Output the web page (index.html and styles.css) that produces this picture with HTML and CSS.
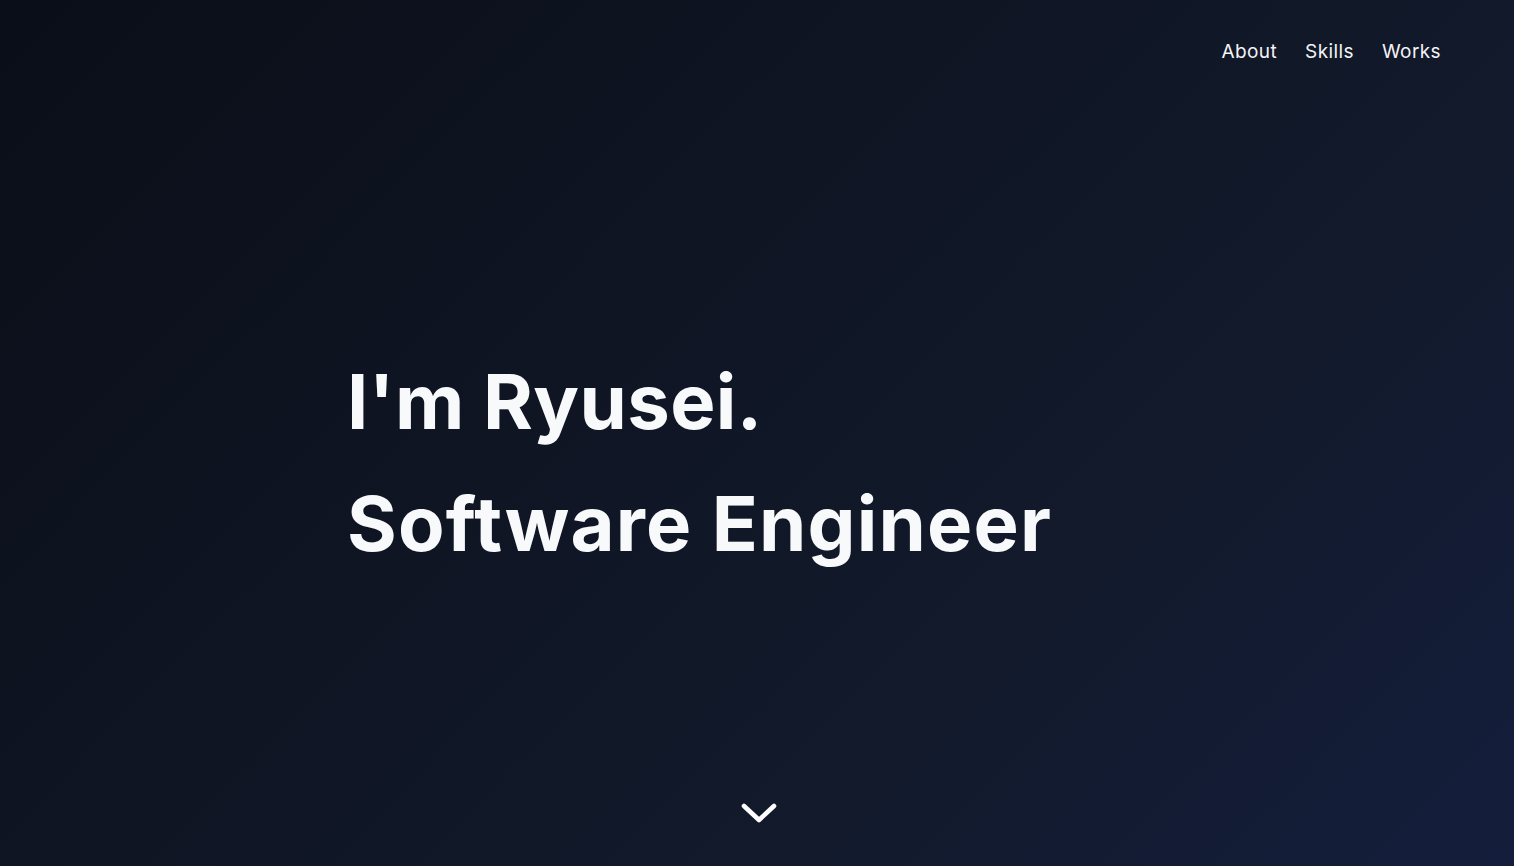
FILE: index.html
```html
<!DOCTYPE html>
<html lang="en">
<head>
<meta charset="utf-8">
<title>Ryusei</title>
<link rel="stylesheet" href="styles.css">
</head>
<body>
<main class="hero">
  <header class="header">
    <nav class="nav">
      <a href="#about" class="nav-link">About</a>
      <a href="#skills" class="nav-link">Skills</a>
      <a href="#works" class="nav-link">Works</a>
    </nav>
  </header>
  <section class="intro">
    <div class="intro-inner">
      <h1 class="title">I'm Ryusei.</h1>
      <h2 class="title title-role">Software Engineer</h2>
    </div>
  </section>
  <div class="scroll">
    <svg class="chevron" width="38" height="24" viewBox="0 0 38 24" fill="none">
      <path d="M4 4 L19 18 L34 4" stroke="#ffffff" stroke-width="4.6" stroke-linecap="round" stroke-linejoin="round"/>
    </svg>
  </div>
</main>
</body>
</html>
```

FILE: styles.css
```css
* { box-sizing: border-box; }
html, body { margin: 0; padding: 0; }
body {
  font-family: Inter, "Open Sans", sans-serif;
  color: #f8f9fb;
  background: #111827;
}
.hero {
  height: 866px;
  display: flex;
  flex-direction: column;
  background: linear-gradient(135deg, #0a0e18 0%, #0f1523 40%, #121a2c 70%, #141e3c 100%);
}
.header {
  display: flex;
  justify-content: flex-end;
  padding: 38px 73px 0 0;
}
.nav {
  display: flex;
  gap: 28px;
}
.nav-link {
  color: #f3f4f6;
  text-decoration: none;
  font-size: 19px;
  font-weight: 400;
  line-height: 28px;
  letter-spacing: 0.4px;
}
.intro {
  flex: 1;
  display: flex;
  align-items: flex-start;
  justify-content: center;
  padding-top: 274px;
}
.intro-inner {
  width: 820px;
}
.title {
  margin: 0;
  font-size: 76px;
  font-weight: 700;
  line-height: 122px;
  letter-spacing: 0.4px;
  color: #f8f9fb;
}
.title-role {
  letter-spacing: 1.2px;
}
.scroll {
  display: flex;
  justify-content: center;
  padding: 0 0 40px 4px;
}
.chevron { display: block; }
```
